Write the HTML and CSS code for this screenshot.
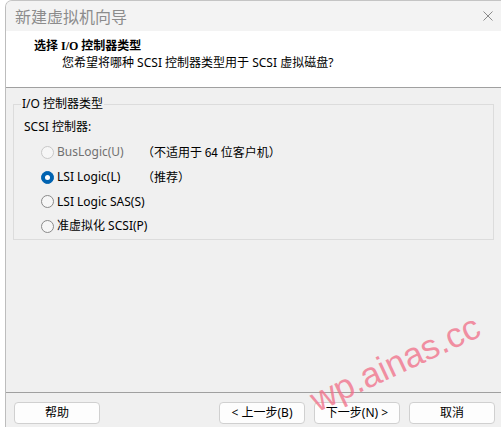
FILE: index.html
```html
<!DOCTYPE html>
<html>
  <head>
    <meta charset="UTF-8" />
    <link rel="stylesheet" href="styles.css">
  </head>
  <body>
    <div class="window">
      <div class="titlebar">
        <span class="title">新建虚拟机向导</span>
        <svg class="close" width="10" height="10" viewBox="0 0 10 10">
          <path d="M0.5 0.5 L9.5 9.5 M9.5 0.5 L0.5 9.5" stroke="#8a8a8a" stroke-width="1" fill="none" />
        </svg>
      </div>

      <div class="header">
        <div class="header-title">选择 I/O 控制器类型</div>
        <div class="header-sub">您希望将哪种 SCSI 控制器类型用于 SCSI 虚拟磁盘?</div>
      </div>

      <div class="content">
        <fieldset class="group">
          <legend>I/O 控制器类型</legend>
          <div class="group-label">SCSI 控制器:</div>
          <div class="options">
            <div class="option disabled">
              <span class="radio"></span>
              <span class="opt-label">BusLogic(U)</span>
              <span class="opt-note">（不适用于 64 位客户机）</span>
            </div>
            <div class="option">
              <span class="radio checked"></span>
              <span class="opt-label">LSI Logic(L)</span>
              <span class="opt-note">（推荐）</span>
            </div>
            <div class="option">
              <span class="radio"></span>
              <span class="opt-label">LSI Logic SAS(S)</span>
            </div>
            <div class="option">
              <span class="radio"></span>
              <span class="opt-label">准虚拟化 SCSI(P)</span>
            </div>
          </div>
        </fieldset>
      </div>

      <div class="footer">
        <button class="btn">帮助</button>
        <div class="spacer"></div>
        <button class="btn">&lt; 上一步(B)</button>
        <button class="btn">下一步(N) &gt;</button>
        <button class="btn">取消</button>
      </div>
    </div>

    <!-- watermark stamped on the screenshot -->
    <div class="watermark">wp.ainas.cc</div>
  </body>
</html>
```

FILE: styles.css
```css
html {
  background: #fff;
}
body {
  margin: 0;
  width: 501px;
  height: 427px;
  overflow: hidden;
  position: relative;
  font-family: "Noto Sans", "Noto Sans CJK SC", sans-serif;
  font-size: 12px;
  color: #000;
}
.window {
  margin-left: 5px;
  height: 427px;
  box-sizing: border-box;
  display: flex;
  flex-direction: column;
  background: #f0f0f0;
  border-left: 1px solid #bdbdbd;
  border-top: 1px solid #c4c4c4;
  border-top-left-radius: 7px;
  overflow: hidden;
}
.titlebar {
  height: 30px;
  flex-shrink: 0;
  display: flex;
  align-items: center;
  justify-content: space-between;
  padding: 0 8px 0 9px;
  background: #f3f3f3;
}
.title {
  font-family: "Noto Sans CJK SC", sans-serif;
  font-size: 16px;
  line-height: 20px;
  color: #8c8c8c;
}
.close {
  display: block;
  margin-top: -1px;
}
.header {
  height: 56px;
  flex-shrink: 0;
  background: #fff;
  border-bottom: 1px solid #a0a0a0;
  padding-top: 7px;
  box-sizing: content-box;
}
.header-title {
  font-family: "Liberation Serif", "Noto Sans CJK SC", serif;
  font-weight: bold;
  font-size: 12px;
  line-height: 16px;
  padding-left: 28px;
}
.header-sub {
  line-height: 16px;
  padding-left: 56px;
  margin-top: 1px;
}
.header {
  height: 49px;
}
.content {
  flex: 1;
  padding: 8px 7px 0 7px;
}
.group {
  margin: 0;
  padding: 7px 10px 0 10px;
  border: 1px solid #dcdcdc;
  height: 144px;
  box-sizing: border-box;
}
.group legend {
  padding: 0 1px;
  margin-left: -3px;
  line-height: 16px;
}
.group-label {
  line-height: 16px;
}
.options {
  margin-top: 5px;
}
.option {
  display: flex;
  align-items: center;
  height: 24.7px;
  padding-left: 17px;
  white-space: nowrap;
}
.radio {
  width: 13px;
  height: 13px;
  box-sizing: border-box;
  border: 1px solid #8a8a8a;
  border-radius: 50%;
  background: #f6f6f6;
  display: flex;
  align-items: center;
  justify-content: center;
  flex-shrink: 0;
}
.radio.checked {
  background: #0063b1;
  border-color: #0063b1;
}
.radio.checked::after {
  content: "";
  width: 5px;
  height: 5px;
  border-radius: 50%;
  background: #fff;
}
.option.disabled .radio {
  border-color: #c8c8c8;
}
.option.disabled .opt-label {
  color: #707070;
}
.opt-label {
  width: 85px;
  margin-left: 3px;
  line-height: 16px;
}
.opt-note {
  line-height: 16px;
  font-family: "Noto Sans CJK SC", sans-serif;
}
.footer {
  height: 35px;
  flex-shrink: 0;
  box-sizing: border-box;
  border-top: 1px solid #a0a0a0;
  padding: 9px 6px 0 8px;
  display: flex;
  gap: 9px;
}
.spacer {
  flex: 1;
}
.btn {
  width: 86px;
  height: 22px;
  padding: 0;
  border: 1px solid #d0d0d0;
  border-radius: 4px;
  background: #fdfdfd;
  font-family: "Noto Sans", "Noto Sans CJK SC", sans-serif;
  font-size: 12px;
  line-height: 16px;
  color: #000;
}
.watermark {
  position: absolute;
  left: 302px;
  top: 343px;
  width: 186px;
  text-align: center;
  font-family: "Liberation Sans", sans-serif;
  font-size: 35px;
  line-height: 40px;
  color: rgba(240, 110, 135, 0.75);
  transform: rotate(-25deg);
  white-space: nowrap;
}
```
